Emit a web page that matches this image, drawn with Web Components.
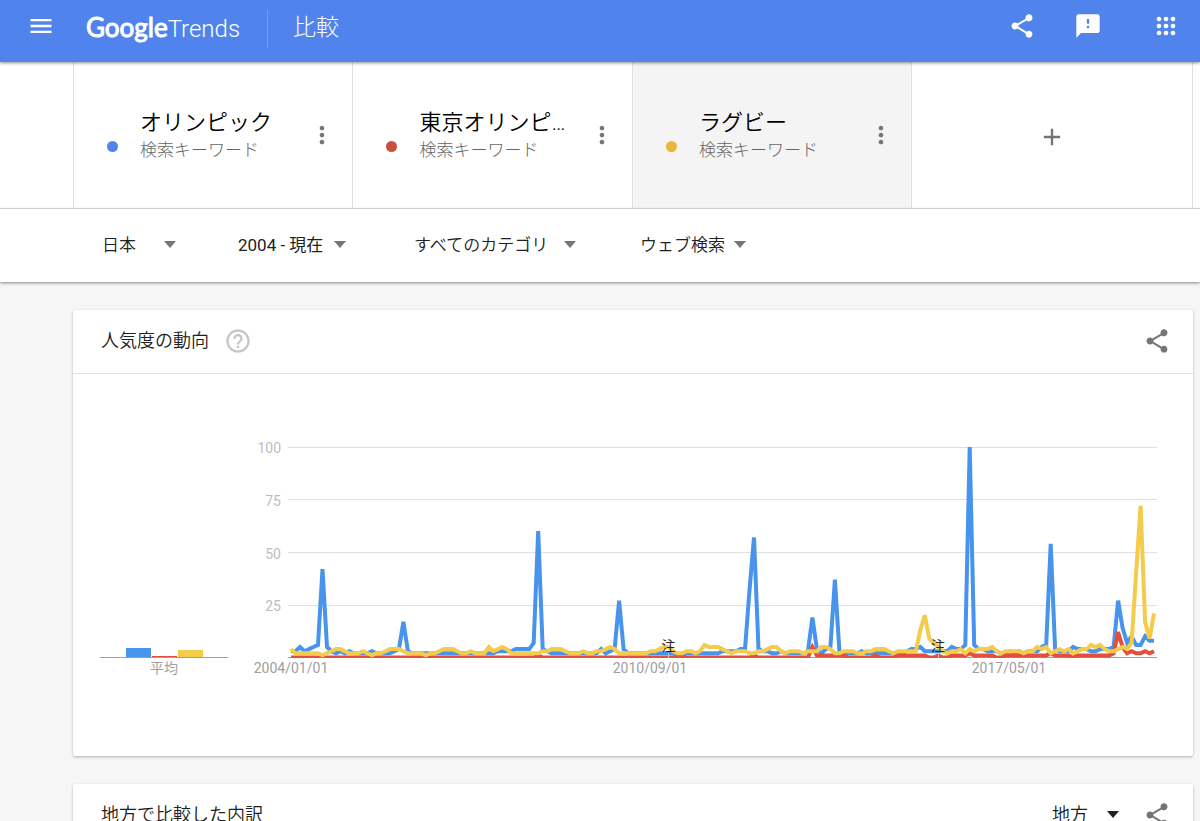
<!DOCTYPE html>
<html lang="ja">
<head>
<meta charset="utf-8">
<title>Google Trends - 比較</title>
<meta name="viewport" content="width=device-width, initial-scale=1">
<style>
  body { margin: 0; background: #f6f6f6; color: #212121; font-family: Roboto, "Noto Sans CJK JP", sans-serif; }
</style>
</head>
<body>
<trends-app></trends-app>
<script>
const define = (name, html, setup) => {
  const template = document.createElement('template');
  template.innerHTML = html;
  customElements.define(name, class extends HTMLElement {
    constructor() {
      super();
      this.attachShadow({ mode: 'open' }).append(template.content.cloneNode(true));
    }
    connectedCallback() { if (setup) setup(this, this.shadowRoot); }
  });
};

const ICONS = {
  menu: 'M3 18h18v-2H3v2zm0-5h18v-2H3v2zm0-7v2h18V6H3z',
  share: 'M18 16.08c-.76 0-1.44.3-1.96.77L8.91 12.7c.05-.23.09-.46.09-.7s-.04-.47-.09-.7l7.05-4.11c.54.5 1.25.81 2.04.81 1.66 0 3-1.34 3-3s-1.34-3-3-3-3 1.34-3 3c0 .24.04.47.09.7L8.04 9.81C7.5 9.31 6.79 9 6 9c-1.66 0-3 1.34-3 3s1.34 3 3 3c.79 0 1.5-.31 2.04-.81l7.12 4.16c-.05.21-.08.43-.08.65 0 1.61 1.31 2.92 2.92 2.92s2.92-1.31 2.92-2.92-1.31-2.92-2.92-2.92z',
  feedback: 'M20 2H4c-1.1 0-1.99.9-1.99 2L2 22l4-4h14c1.1 0 2-.9 2-2V4c0-1.1-.9-2-2-2zm-7 12h-2v-2h2v2zm0-4h-2V6h2v4z',
  apps: 'M6 4a2 2 0 1 0 .01 0zM12 4a2 2 0 1 0 .01 0zM18 4a2 2 0 1 0 .01 0zM6 10a2 2 0 1 0 .01 0zM12 10a2 2 0 1 0 .01 0zM18 10a2 2 0 1 0 .01 0zM6 16a2 2 0 1 0 .01 0zM12 16a2 2 0 1 0 .01 0zM18 16a2 2 0 1 0 .01 0z',
  more: 'M12 8c1.1 0 2-.9 2-2s-.9-2-2-2-2 .9-2 2 .9 2 2 2zm0 2c-1.1 0-2 .9-2 2s.9 2 2 2 2-.9 2-2-.9-2-2-2zm0 6c-1.1 0-2 .9-2 2s.9 2 2 2 2-.9 2-2-.9-2-2-2z',
  add: 'M19 13h-6v6h-2v-6H5v-2h6V5h2v6h6v2z',
  help: 'M11 18h2v-2h-2v2zm1-16C6.48 2 2 6.48 2 12s4.48 10 10 10 10-4.48 10-10S17.52 2 12 2zm0 18c-4.41 0-8-3.59-8-8s3.59-8 8-8 8 3.59 8 8-3.59 8-8 8zm0-14c-2.21 0-4 1.79-4 4h2c0-1.1.9-2 2-2s2 .9 2 2c0 2-3 1.75-3 5h2c0-2.25 3-2.5 3-5 0-2.21-1.79-4-4-4z'
};

define('icon-button', `
  <style>
    :host { display: block; flex: none; width: 28px; height: 28px; color: #757575; }
    button { display: block; border: 0; padding: 0; width: 100%; height: 100%; background: none; color: inherit; cursor: pointer; }
    svg { display: block; width: 28px; height: 28px; fill: currentColor; }
  </style>
  <button type="button"><svg viewBox="0 0 24 24" aria-hidden="true"><path/></svg></button>`,
  (el, root) => {
    root.querySelector('path').setAttribute('d', ICONS[el.getAttribute('icon')]);
    root.querySelector('button').setAttribute('aria-label', el.getAttribute('label'));
  });

define('drop-down', `
  <style>
    :host { display: inline-flex; align-items: center; color: #212121; --arrow: #757575; }
    select { appearance: none; border: 0; margin: 0; padding: 0; background: none; color: inherit;
      font: inherit; line-height: 26px; flex: 1; min-width: 0; cursor: pointer; }
    svg { flex: none; width: 12px; height: 7px; fill: var(--arrow); pointer-events: none; }
  </style>
  <select><option></option></select><svg viewBox="0 0 12 7" aria-hidden="true"><path d="M0 0h12L6 7z"/></svg>`,
  (el, root) => {
    root.querySelector('option').textContent = el.getAttribute('value');
    root.querySelector('select').setAttribute('aria-label', el.getAttribute('label'));
  });

define('trends-header', `
  <style>
    :host { display: flex; align-items: center; box-sizing: border-box; height: 62px; padding: 0 20px 10px 27px;
      background: #5083ec; color: #fff; box-shadow: 0 1px 3px rgba(0,0,0,.45); position: relative; z-index: 2; flex: none; }
    icon-button { color: #fff; }
    .logo { display: flex; align-items: baseline; padding-top: 3px; margin-left: 31px; color: #fff; text-decoration: none;
      line-height: 36px; }
    .google { font-family: Lato, sans-serif; font-size: 26px; -webkit-text-stroke: 1px #fff; }
    .trends { font-weight: 350; font-size: 24px; }
    .divider { width: 1px; height: 38px; margin: 6px 25px 0 27px; background: #759df0; }
    h1 { margin: 0; padding-top: 4px; font-size: 23px; line-height: 36px; font-weight: 300; }
    nav { display: flex; align-items: center; margin-left: auto; }
    nav icon-button:nth-child(2) { margin: 0 50px 0 38px; }
  </style>
  <icon-button icon="menu" label="メニュー"></icon-button>
  <a class="logo" href="#"><span class="google">Google</span><span class="trends">Trends</span></a>
  <span class="divider"></span>
  <h1>比較</h1>
  <nav>
    <icon-button icon="share" label="共有"></icon-button>
    <icon-button icon="feedback" label="フィードバック"></icon-button>
    <icon-button icon="apps" label="アプリ"></icon-button>
  </nav>`);

define('search-term', `
  <style>
    :host { display: flex; align-items: center; min-width: 0; box-sizing: border-box; padding: 0 16px 0 33px;
      border-left: 1px solid #e0e0e0; }
    .dot { flex: none; width: 11px; height: 11px; margin: 22px 22px 0 0; border-radius: 50%; background: var(--dot); }
    .text { flex: 1; min-width: 0; padding: 2px 8px 0 0; }
    h2, p { margin: 0; overflow: hidden; white-space: nowrap; text-overflow: ellipsis; }
    h2 { font-size: 22px; line-height: 28px; font-weight: 350; color: #000; }
    p { font-size: 17px; line-height: 26px; font-weight: 300; color: #666; }
  </style>
  <span class="dot"></span>
  <div class="text"><h2><slot></slot></h2><p>検索キーワード</p></div>
  <icon-button icon="more" label="その他"></icon-button>`);

define('search-terms', `
  <style>
    :host { display: grid; grid-template-columns: repeat(3, minmax(0, 279fr)) minmax(0, 281fr); height: 146px; padding: 0 7px 0 73px;
      background: #fff; border-bottom: 1px solid #e0e0e0; flex: none; }
    .active { background: #f4f4f4; }
    .add { display: flex; align-items: center; justify-content: center; padding-top: 4px; border: solid #e0e0e0; border-width: 0 1px; }
  </style>
  <search-term style="--dot:#5083ec">オリンピック</search-term>
  <search-term style="--dot:#c94f3f">東京オリンピック</search-term>
  <search-term class="active" style="--dot:#e9b53e">ラグビー</search-term>
  <div class="add"><icon-button icon="add" label="比較を追加"></icon-button></div>`);

define('filter-bar', `
  <style>
    :host { display: grid; grid-template-columns: 136px 176px 226px auto; align-items: center; justify-content: start;
      box-sizing: border-box; height: 73px; padding: 0 0 2px 102px; background: #fff; font-size: 17px; font-weight: 350;
      box-shadow: 0 1px 3px rgba(0,0,0,.45); position: relative; z-index: 1; flex: none; }
    .place { width: 74px; }
    .time { width: 108px; font-weight: 400; }
    .category { width: 162px; }
    .type { width: 106px; }
  </style>
  <drop-down class="place" label="地域" value="日本"></drop-down>
  <drop-down class="time" label="期間" value="2004 - 現在"></drop-down>
  <drop-down class="category" label="カテゴリ" value="すべてのカテゴリ"></drop-down>
  <drop-down class="type" label="検索の種類" value="ウェブ検索"></drop-down>`);

define('trends-card', `
  <style>
    :host { display: block; background: #fff; border-radius: 2px; box-shadow: 0 1px 3px rgba(0,0,0,.28); }
    header { display: flex; align-items: center; box-sizing: border-box; height: 64px; padding: 0 22px 2px 28px; border-bottom: 1px solid #e0e0e0; }
    h2 { margin: 0 15px 0 0; font-size: 18px; line-height: 26px; font-weight: 350; }
    .tools { display: flex; align-items: center; gap: 24px; margin-left: auto; }
  </style>
  <header>
    <h2><slot name="title"></slot></h2><slot name="help"></slot>
    <div class="tools"><slot name="tools"></slot><icon-button icon="share" label="共有"></icon-button></div>
  </header>
  <slot></slot>`);

/* Monthly interest values, January 2004 to January 2020. */
const BLUE = [3,3,5,3,4,5,6,42,5,3,2,3,2,3,2,2,2,2,3,2,2,2,2,3,4,17,3,2,2,2,2,2,2,2,2,2,2,2,2,2,2,2,2,2,2,2,3,3,3,3,
  4,4,4,4,7,60,4,3,2,2,2,2,2,2,2,2,2,2,2,4,2,3,4,27,4,2,2,2,2,2,2,2,2,2,2,2,1,1,2,2,2,2,2,2,2,2,3,3,3,3,
  4,4,32,57,4,3,3,2,2,3,2,2,2,2,2,3,19,4,2,4,5,37,3,2,2,2,2,3,2,2,2,2,2,2,2,2,2,3,4,4,5,3,3,3,3,3,3,5,4,4,
  6,100,6,4,4,3,3,3,2,2,3,2,3,2,3,3,3,5,6,54,4,3,3,3,5,4,4,4,3,3,4,4,4,5,27,14,7,10,6,6,10,8,8];
const YELLOW = [4,2,2,2,2,2,2,1,2,3,4,4,3,2,2,2,3,2,1,2,2,3,4,4,4,3,2,2,2,2,1,2,2,3,4,4,4,3,2,2,3,2,2,2,5,3,4,5,4,2,
  2,2,2,2,2,2,3,3,4,4,4,3,2,2,2,3,2,2,3,3,4,5,4,2,2,2,2,2,2,2,3,3,4,5,5,3,2,2,3,3,2,3,6,5,5,5,4,3,2,3,
  3,3,2,2,3,3,4,5,5,3,2,3,3,3,2,3,3,3,5,5,4,2,2,3,3,3,2,2,3,3,4,4,4,3,2,3,3,3,3,3,13,20,9,7,5,3,2,3,3,4,
  2,4,3,4,4,4,5,3,2,3,3,3,3,2,3,3,5,4,5,2,3,4,3,4,2,3,4,4,6,5,6,4,3,3,4,5,4,7,40,72,17,9,21];
const RED = Array.from({ length: 193 }, (_, i) => {
  const known = { 55: 1, 103: 1, 116: 5, 130: 1, 142: 0, 143: 0, 144: 1, 145: 0, 146: 0, 151: 2, 157: 0, 158: 0, 169: 2, 174: 0, 183: 2, 184: 12, 185: 5,
    186: 2, 187: 3, 188: 2, 189: 2, 190: 3, 191: 2, 192: 3 };
  return i in known ? known[i] : i < 117 || (i > 123 && i < 135) ? 0 : 1;
});

define('trend-chart', `
  <style>
    :host { display: grid; grid-template-columns: 128px 60px minmax(0, 1fr); grid-template-rows: 211px auto;
      padding: 73px 36px 78px 27px; font-size: 14px; line-height: 20px; color: #9e9e9e; }
    .bars { display: flex; align-items: flex-end; justify-content: center; gap: 1px; border-bottom: 1px solid #9e9e9e; }
    .bars i { width: 25px; }
    .y { display: grid; grid-template-rows: repeat(4, 1fr); height: 211px; margin: -9px 7px 0 0; text-align: right; color: #bdbdbd; }
    .plot { position: relative; }
    svg { display: block; width: 100%; height: 211px; overflow: hidden; }
    polyline { fill: none; stroke-width: 4; vector-effect: non-scaling-stroke; }
    .grid { stroke: #e0e0e0; shape-rendering: crispEdges; }
    .note { position: absolute; bottom: 2px; width: 16px; margin-left: -8px; color: #212121; text-align: center; }
    .average { text-align: center; }
    .x { grid-column: 3; display: grid; grid-template-columns: 80fr 80fr 33fr; padding-left: 3px; }
    .x span { display: flex; justify-content: center; width: 0; }
  </style>
  <div class="bars">
    <i style="height:9px;background:#4893ec"></i><i style="height:1px;background:#e24f3d"></i><i style="height:7px;background:#f5cb4c"></i>
  </div>
  <div class="y"><span>100</span><span>75</span><span>50</span><span>25</span></div>
  <div class="plot">
    <svg viewBox="0 0 869 211" preserveAspectRatio="none" role="img" aria-label="人気度の動向">
      <path class="grid" d="M0 .5H869M0 52.5H869M0 105.5H869M0 158.5H869"/>
      <path class="grid" style="stroke:#9e9e9e" d="M0 210.5H869"/>
      <polyline id="blue" stroke="#4893ec"/><polyline id="red" stroke="#e24f3d"/><polyline id="yellow" stroke="#f5cb4c"/>
      <path class="grid" style="stroke:#bdbdbd" d="M380.5 206V211M650.5 206V211"/>
    </svg>
    <span class="note" style="left:43.8%">注</span><span class="note" style="left:74.8%">注</span>
  </div>
  <span class="average">平均</span>
  <div class="x"><span>2004/01/01</span><span>2010/09/01</span><span>2017/05/01</span></div>`,
  (el, root) => {
    const draw = (id, data) => root.getElementById(id).setAttribute('points',
      data.map((v, i) => `${(3 + i * 4.495).toFixed(1)},${(210.5 - v * 2.105).toFixed(1)}`).join(' '));
    draw('blue', BLUE); draw('red', RED); draw('yellow', YELLOW);
  });

define('trends-app', `
  <style>
    :host { display: flex; flex-direction: column; height: 100vh; }
    main { flex: 1; min-height: 0; overflow-y: auto; scrollbar-width: none; display: grid; align-content: start; gap: 28px; padding: 28px 7px 28px 73px; }
    .help { color: #c6c6c6; }
    .region { width: 67px; font-size: 18px; font-weight: 350; --arrow: #212121; }
  </style>
  <trends-header></trends-header>
  <search-terms></search-terms>
  <filter-bar></filter-bar>
  <main>
    <trends-card>
      <span slot="title">人気度の動向</span>
      <icon-button class="help" slot="help" icon="help" label="ヘルプ"></icon-button>
      <trend-chart></trend-chart>
    </trends-card>
    <trends-card>
      <span slot="title">地方で比較した内訳</span>
      <drop-down class="region" slot="tools" label="表示単位" value="地方"></drop-down>
    </trends-card>
  </main>`);
</script>
</body>
</html>
